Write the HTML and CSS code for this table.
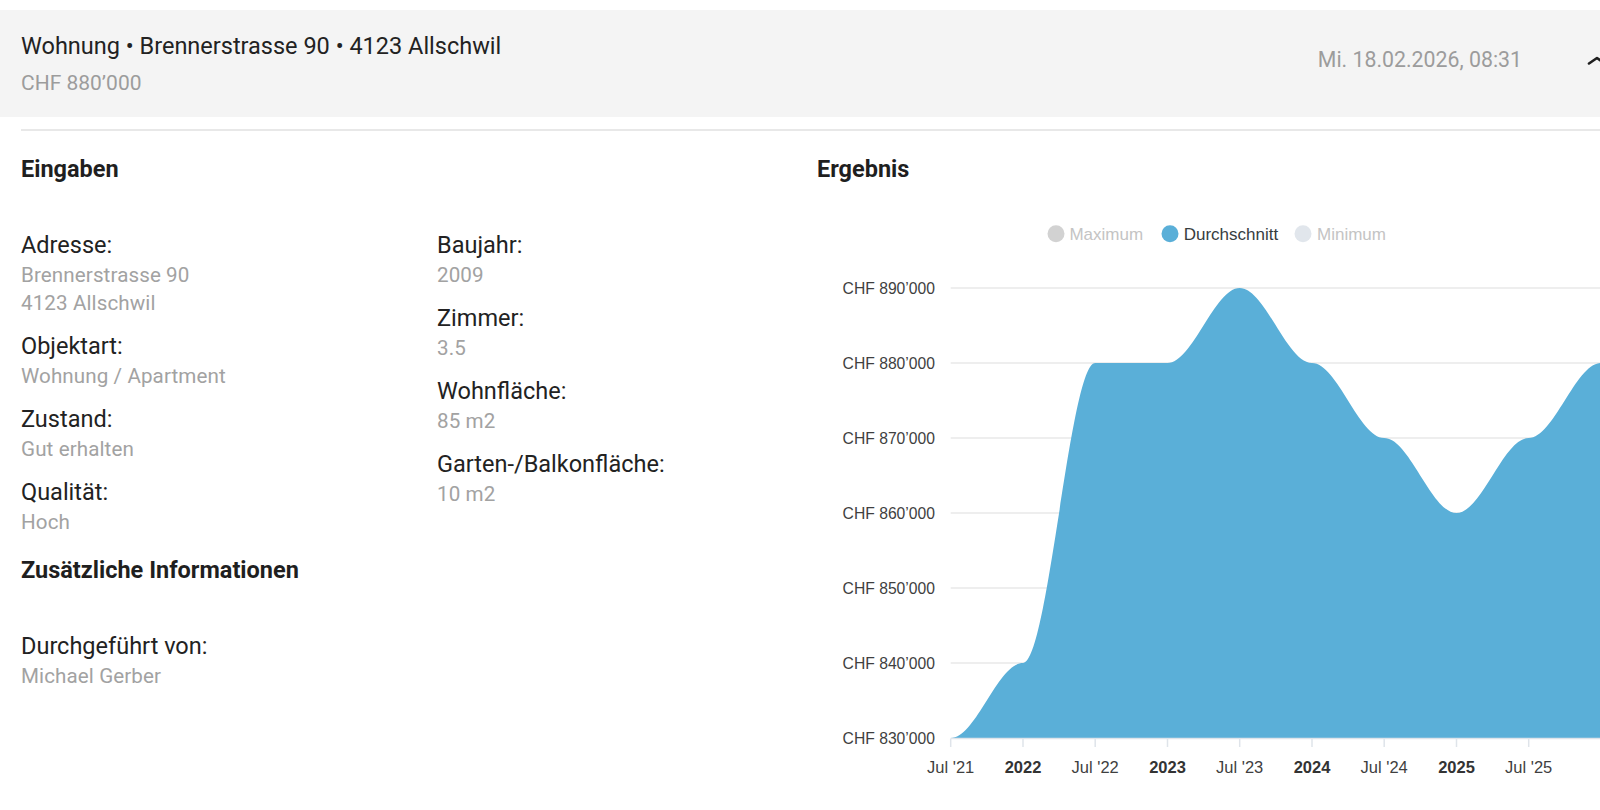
FILE: index.html
```html
<!DOCTYPE html>
<html lang="de">
<head>
<meta charset="utf-8">
<title>Bewertung</title>
<link rel="stylesheet" href="styles.css">
</head>
<body>
<div class="page">
  <header class="summary">
    <div class="summary-main">
      <div class="summary-title">Wohnung • Brennerstrasse 90 • 4123 Allschwil</div>
      <div class="summary-price">CHF 880’000</div>
    </div>
    <div class="summary-date">Mi. 18.02.2026, 08:31</div>
    <svg class="summary-toggle" width="24" height="16" viewBox="0 0 24 16"><polyline points="3,11.5 11,6 19,11.5" fill="none" stroke="#1f1f1f" stroke-width="2.6" stroke-linecap="round" stroke-linejoin="round"/></svg>
  </header>
  <div class="divider"></div>
  <main class="content">
    <section class="inputs">
      <h2 class="section-title">Eingaben</h2>
      <div class="fields">
        <div class="col">
          <div class="field"><div class="label">Adresse:</div><div class="value">Brennerstrasse 90</div><div class="value">4123 Allschwil</div></div>
          <div class="field"><div class="label">Objektart:</div><div class="value">Wohnung / Apartment</div></div>
          <div class="field"><div class="label">Zustand:</div><div class="value">Gut erhalten</div></div>
          <div class="field"><div class="label">Qualität:</div><div class="value">Hoch</div></div>
        </div>
        <div class="col">
          <div class="field"><div class="label">Baujahr:</div><div class="value">2009</div></div>
          <div class="field"><div class="label">Zimmer:</div><div class="value">3.5</div></div>
          <div class="field"><div class="label">Wohnfläche:</div><div class="value">85 m2</div></div>
          <div class="field"><div class="label">Garten-/Balkonfläche:</div><div class="value">10 m2</div></div>
        </div>
      </div>
      <h2 class="section-title extra">Zusätzliche Informationen</h2>
      <div class="field"><div class="label">Durchgeführt von:</div><div class="value">Michael Gerber</div></div>
    </section>
    <section class="result">
      <h2 class="section-title">Ergebnis</h2>
      <svg class="chart" width="820" height="620" viewBox="817 185 820 620">
        <g class="legend">
          <circle cx="1056" cy="233.7" r="8.5" fill="#d2d2d2"/>
          <text x="1069.4" y="239.8" class="legend-off">Maximum</text>
          <circle cx="1170" cy="233.7" r="8.5" fill="#5aafd8"/>
          <text x="1183.7" y="239.8" class="legend-on">Durchschnitt</text>
          <circle cx="1303" cy="233.7" r="8.5" fill="#e1e6ec"/>
          <text x="1317" y="239.8" class="legend-off">Minimum</text>
        </g>
        <g class="grid">
          <line x1="950.7" y1="288" x2="1640" y2="288"/>
          <line x1="950.7" y1="363" x2="1640" y2="363"/>
          <line x1="950.7" y1="438" x2="1640" y2="438"/>
          <line x1="950.7" y1="513" x2="1640" y2="513"/>
          <line x1="950.7" y1="588" x2="1640" y2="588"/>
          <line x1="950.7" y1="663" x2="1640" y2="663"/>
        </g>
        <g class="ylabels">
          <text x="935" y="293.6">CHF 890’000</text>
          <text x="935" y="368.6">CHF 880’000</text>
          <text x="935" y="443.6">CHF 870’000</text>
          <text x="935" y="518.6">CHF 860’000</text>
          <text x="935" y="593.6">CHF 850’000</text>
          <text x="935" y="668.6">CHF 840’000</text>
          <text x="935" y="743.6">CHF 830’000</text>
        </g>
        <path class="area" d="M950.7,738 C976,738 997.7,663 1023,663 C1048.2,663 1069.9,363 1095.2,363 C1120.5,363 1142.2,363 1167.5,363 C1192.7,363 1214.4,288 1239.7,288 C1265,288 1286.7,363 1312,363 C1337.2,363 1358.9,438 1384.2,438 C1409.5,438 1431.2,513 1456.5,513 C1481.7,513 1503.4,438 1528.7,438 C1554,438 1575.7,363 1601,363 C1626.2,363 1647.9,363 1673.2,363 L1673.2,738 Z"/>
        <g class="axis">
          <line x1="950.7" y1="738.5" x2="1640" y2="738.5"/>
          <line x1="950.7" y1="738.5" x2="950.7" y2="747"/>
          <line x1="1023" y1="738.5" x2="1023" y2="747"/>
          <line x1="1095.2" y1="738.5" x2="1095.2" y2="747"/>
          <line x1="1167.5" y1="738.5" x2="1167.5" y2="747"/>
          <line x1="1239.7" y1="738.5" x2="1239.7" y2="747"/>
          <line x1="1312" y1="738.5" x2="1312" y2="747"/>
          <line x1="1384.2" y1="738.5" x2="1384.2" y2="747"/>
          <line x1="1456.5" y1="738.5" x2="1456.5" y2="747"/>
          <line x1="1528.7" y1="738.5" x2="1528.7" y2="747"/>
        </g>
        <g class="xlabels">
          <text x="950.7" y="773">Jul '21</text>
          <text x="1023" y="773" class="year">2022</text>
          <text x="1095.2" y="773">Jul '22</text>
          <text x="1167.5" y="773" class="year">2023</text>
          <text x="1239.7" y="773">Jul '23</text>
          <text x="1312" y="773" class="year">2024</text>
          <text x="1384.2" y="773">Jul '24</text>
          <text x="1456.5" y="773" class="year">2025</text>
          <text x="1528.7" y="773">Jul '25</text>
        </g>
      </svg>
    </section>
  </main>
</div>
</body>
</html>
```
FILE: styles.css
```css
html, body {
  margin: 0;
  padding: 0;
  background: #ffffff;
}
body {
  overflow: hidden;
  height: 810px;
  font-family: Roboto, "Noto Sans", Arial, sans-serif;
  color: #212121;
}
.page {
  width: 1660px;
  padding-top: 10px;
}
.summary {
  display: flex;
  align-items: flex-start;
  background: #f4f4f4;
  height: 107px;
  box-sizing: border-box;
  padding: 20px 50px 0 21px;
}
.summary-main {
  flex: 1;
}
.summary-title {
  font-size: 23.5px;
  line-height: 32px;
  color: #222222;
}
.summary-price {
  font-size: 21px;
  line-height: 30px;
  margin-top: 6px;
  color: #9c9c9c;
}
.summary-date {
  font-size: 21.3px;
  line-height: 32px;
  margin-top: 14px;
  color: #9c9c9c;
}
.summary-toggle {
  display: block;
  margin-top: 22px;
  margin-left: 64px;
}
.divider {
  height: 2px;
  margin: 12px 0 0 21px;
  background: #e8e8e8;
}
.content {
  display: grid;
  grid-template-columns: 796px 1fr;
  padding: 22px 0 0 21px;
}
.section-title {
  margin: 0 0 44px 0;
  font-size: 23.5px;
  line-height: 32px;
  font-weight: 700;
  color: #1f1f1f;
}
.section-title.extra {
  margin-top: 4.5px;
}
.result .section-title {
  margin-bottom: 0;
}
.fields {
  display: grid;
  grid-template-columns: 416px 1fr;
}
.field {
  margin-bottom: 13px;
}
.label {
  font-size: 23.5px;
  line-height: 32px;
  color: #222222;
}
.value {
  font-size: 20.6px;
  line-height: 28px;
  color: #a2a2a2;
  letter-spacing: 0.1px;
}
.chart {
  display: block;
  font-family: "Liberation Sans", Arial, Helvetica, sans-serif;
}
.legend text {
  font-size: 17px;
}
.legend-on {
  fill: #373d3f;
}
.legend-off {
  fill: #c4c4c4;
}
.grid line {
  stroke: #e8e8e8;
  stroke-width: 1.5;
}
.ylabels text {
  font-size: 15.7px;
  fill: #3f3f3f;
  text-anchor: end;
}
.area {
  fill: #5aafd8;
}
.axis line {
  stroke: #dfe4ea;
  stroke-width: 1.5;
}
.xlabels text {
  font-size: 16.5px;
  fill: #3f3f3f;
  text-anchor: middle;
}
.xlabels .year {
  font-weight: 700;
  fill: #333333;
}
```
